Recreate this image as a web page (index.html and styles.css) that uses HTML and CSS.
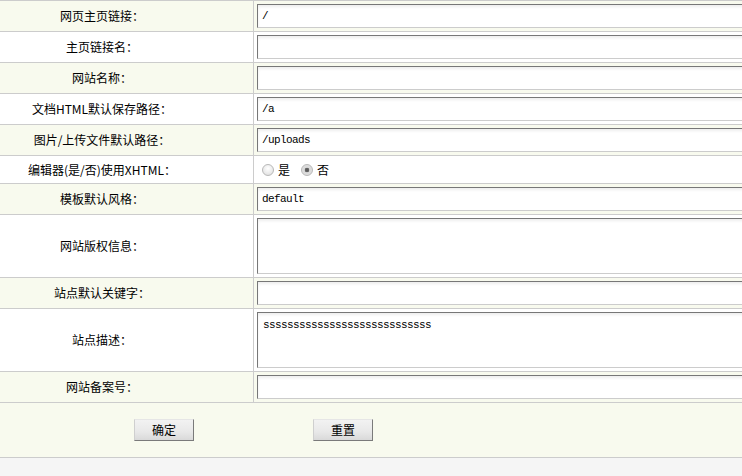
FILE: index.html
```html
<!DOCTYPE html>
<html lang="zh-CN">
<head>
<meta charset="utf-8">
<title>系统设置</title>
<link rel="stylesheet" href="styles.css">
</head>
<body>
<form class="form">
  <div class="row alt">
    <div class="label">网页主页链接：</div>
    <div class="field"><input class="text" type="text" value="/"></div>
  </div>
  <div class="row">
    <div class="label">主页链接名：</div>
    <div class="field"><input class="text" type="text" value=""></div>
  </div>
  <div class="row alt">
    <div class="label">网站名称：</div>
    <div class="field"><input class="text" type="text" value=""></div>
  </div>
  <div class="row">
    <div class="label">文档HTML默认保存路径：</div>
    <div class="field"><input class="text" type="text" value="/a"></div>
  </div>
  <div class="row alt">
    <div class="label">图片/上传文件默认路径：</div>
    <div class="field"><input class="text" type="text" value="/uploads"></div>
  </div>
  <div class="row radio-row">
    <div class="label">编辑器(是/否)使用XHTML：</div>
    <div class="field">
      <label class="opt"><input class="radio" type="radio" name="xhtml"><span>是</span></label>
      <label class="opt"><input class="radio" type="radio" name="xhtml" checked><span>否</span></label>
    </div>
  </div>
  <div class="row alt">
    <div class="label">模板默认风格：</div>
    <div class="field"><input class="text" type="text" value="default"></div>
  </div>
  <div class="row">
    <div class="label">网站版权信息：</div>
    <div class="field"><textarea class="area"></textarea></div>
  </div>
  <div class="row alt">
    <div class="label">站点默认关键字：</div>
    <div class="field"><input class="text" type="text" value=""></div>
  </div>
  <div class="row">
    <div class="label">站点描述：</div>
    <div class="field"><textarea class="area">ssssssssssssssssssssssssssss</textarea></div>
  </div>
  <div class="row alt">
    <div class="label">网站备案号：</div>
    <div class="field"><input class="text" type="text" value=""></div>
  </div>
  <div class="actions">
    <button class="btn" type="button">确定</button>
    <button class="btn" type="button">重置</button>
  </div>
</form>
</body>
</html>
```

FILE: styles.css
```css
html, body {
  margin: 0;
  padding: 0;
  overflow: hidden;
  background: #f5f5f5;
}
body {
  font-family: "Noto Sans CJK SC", "Noto Sans", sans-serif;
  font-size: 12px;
  color: #000;
}
.form {
  border-top: 1px solid #cccccc;
  margin: 0;
}
.row {
  display: grid;
  grid-template-columns: 254px 1fr;
  background: #ffffff;
  border-bottom: 1px solid #cccccc;
  min-height: 30px;
}
.row.alt {
  background: #f8faee;
}
.label {
  box-sizing: border-box;
  border-right: 1px solid #cccccc;
  display: flex;
  align-items: center;
  justify-content: center;
  padding-right: 49px;
  white-space: nowrap;
  line-height: 14px;
}
.field {
  display: flex;
  align-items: center;
  padding: 3px 0 3px 3px;
  overflow: hidden;
  white-space: nowrap;
}
.text, .area {
  box-sizing: border-box;
  flex: none;
  width: 540px;
  margin: 0;
  border: 1px solid;
  border-color: #777777 #cccccc #cccccc #777777;
  background: #ffffff;
  box-shadow: inset 0 2px 3px rgba(0, 0, 0, 0.07);
  font-family: "Liberation Mono", monospace;
  font-size: 11px;
  letter-spacing: -0.6px;
  color: #000;
  outline: none;
}
.text {
  height: 24px;
  padding: 0 4px;
}
.area {
  height: 56px;
  padding: 6px 5px;
  resize: none;
  display: block;
  line-height: 12px;
}
.radio-row {
  min-height: 27px;
}
.radio-row .field {
  padding-top: 0;
  padding-bottom: 0;
  padding-left: 8px;
}
.opt {
  display: inline-flex;
  align-items: center;
  margin-right: 11px;
}
.opt span {
  margin-left: 4px;
  line-height: 14px;
}
.radio {
  appearance: none;
  -webkit-appearance: none;
  width: 12px;
  height: 12px;
  margin: 0;
  border-radius: 50%;
  border: 1px solid #b8b8b8;
  box-sizing: border-box;
  background: radial-gradient(circle at 50% 35%, #ffffff 0%, #e6e6e6 70%, #d6d6d6 100%);
}
.radio:checked {
  background: radial-gradient(circle, #555555 0, #666666 2px, #d8d8d8 2.6px, #e4e4e4 100%);
}
.actions {
  display: flex;
  align-items: center;
  gap: 119px;
  padding-left: 134px;
  height: 54px;
  background: #f8faee;
  border-bottom: 1px solid #cccccc;
}
.btn {
  box-sizing: border-box;
  width: 60px;
  height: 22px;
  margin: 0;
  padding: 0;
  border: 1px solid;
  border-color: #e6e6e6 #7a7a7a #7a7a7a #cfcfcf;
  background: linear-gradient(#f2f2f2, #e8e8e8 60%, #d9d9d9);
  font-family: "Noto Sans CJK SC", sans-serif;
  font-size: 12px;
  color: #000;
  line-height: 20px;
}
```
